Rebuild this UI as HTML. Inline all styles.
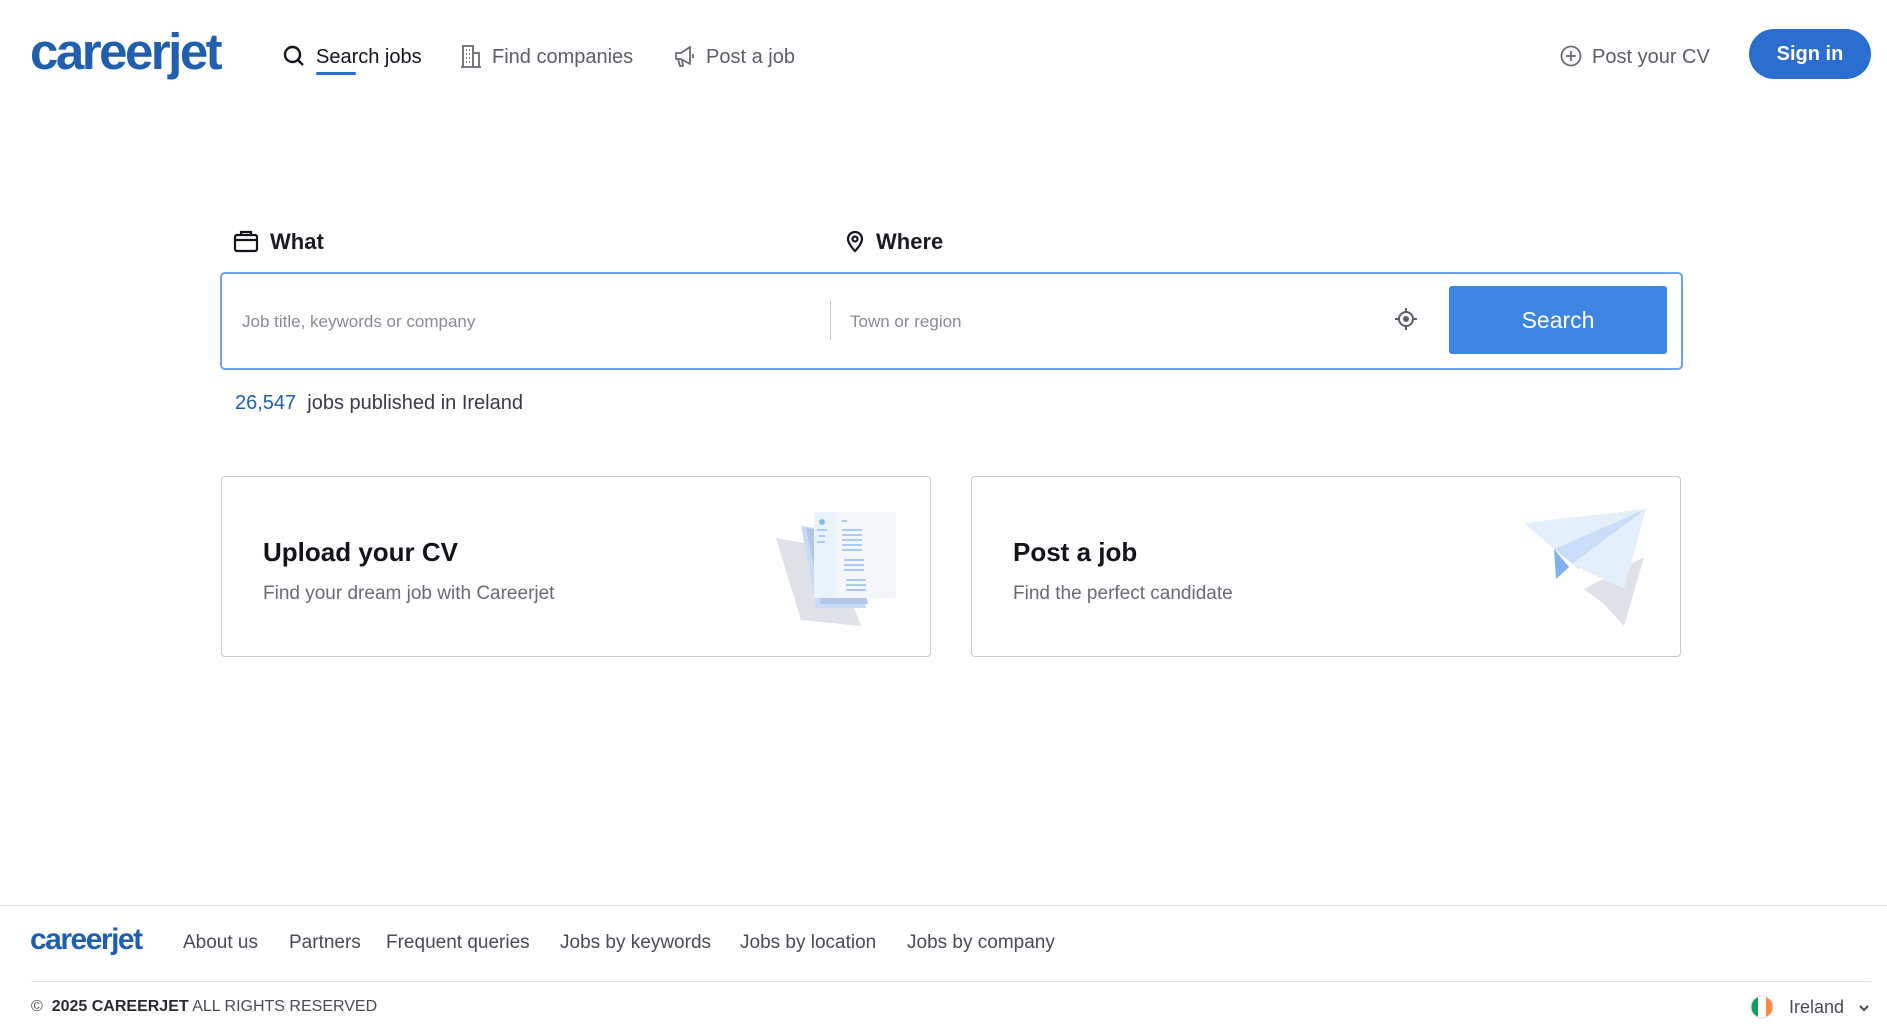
<!DOCTYPE html>
<html><head><meta charset="utf-8"><style>
*{margin:0;padding:0;box-sizing:border-box}
body{width:1887px;height:1026px;position:relative;background:#fff;font-family:"Liberation Sans",sans-serif;color:#1a1a23;overflow:hidden}
.a{position:absolute;white-space:nowrap}
.nav{font-size:20px;color:#5d5d68;top:46px}
.logo{font-weight:bold;color:#1f5fad}
.card{position:absolute;top:476px;height:181px;width:710px;border:1px solid #c9c9d1;border-radius:4px;background:#fff}
.card h2{position:absolute;left:41px;top:60px;font-size:26px;font-weight:bold;color:#13131b}
.card p{position:absolute;left:41px;top:106px;font-size:19px;color:#6a6a74}
.fl{font-size:19px;color:#4a4a55;top:932px}
</style></head><body>
<div class="a logo" style="left:30px;top:22px;font-size:51px;letter-spacing:-2.5px">careerjet</div>

<svg class="a" style="left:283px;top:45px" width="22" height="22" viewBox="0 0 22 22" fill="none" stroke="#13131b" stroke-width="2.4"><circle cx="9.5" cy="9.5" r="7.5"/><path d="M15 15l5 5"/></svg>
<div class="a nav" style="left:316px;color:#13131b">Search jobs</div>
<div class="a" style="left:316px;top:72px;width:40px;height:3px;background:#2a6fcf;border-radius:2px"></div>

<svg class="a" style="left:460px;top:44px" width="22" height="24" viewBox="0 0 22 24" fill="none" stroke="#6a6a74" stroke-width="1.8"><path d="M3 23V2h10v21M13 9h6v14M1 23h20M6 6h1M9 6h1M6 10h1M9 10h1M6 14h1M9 14h1M6 18h1M9 18h1"/></svg>
<div class="a nav" style="left:492px">Find companies</div>

<svg class="a" style="left:673px;top:44px" width="24" height="24" viewBox="0 0 24 24" fill="none" stroke="#6a6a74" stroke-width="1.8" stroke-linejoin="round"><path d="M3 9h5l9-6v17l-9-5H3z M5 15l2 7h3l-1-6 M20 10v4"/></svg>
<div class="a nav" style="left:706px">Post a job</div>

<svg class="a" style="left:1560px;top:45px" width="22" height="22" viewBox="0 0 22 22" fill="none" stroke="#6a6a74" stroke-width="1.8"><circle cx="11" cy="11" r="9.5"/><path d="M11 6v10M6 11h10"/></svg>
<div class="a nav" style="left:1592px">Post your CV</div>
<div class="a" style="left:1749px;top:29px;width:122px;height:50px;border-radius:25px;background:#2a6fcf;color:#fff;font-size:20px;font-weight:bold;text-align:center;line-height:50px">Sign in</div>

<svg class="a" style="left:233px;top:229px" width="26" height="24" viewBox="0 0 26 24" fill="none" stroke="#13131b" stroke-width="2.2"><rect x="2" y="6" width="22" height="16" rx="2"/><path d="M8 6V3h10v3M2 11h22"/></svg>
<div class="a" style="left:270px;top:229px;font-size:22px;font-weight:bold">What</div>
<svg class="a" style="left:845px;top:229px" width="20" height="24" viewBox="0 0 20 24" fill="none" stroke="#13131b" stroke-width="2.2"><path d="M10 22s-7-7-7-12a7 7 0 0 1 14 0c0 5-7 12-7 12z"/><circle cx="10" cy="10" r="2.5"/></svg>
<div class="a" style="left:876px;top:229px;font-size:22px;font-weight:bold">Where</div>

<div class="a" style="left:220px;top:272px;width:1463px;height:98px;border:2px solid #6aa5ea;border-radius:5px"></div>
<div class="a" style="left:242px;top:312px;font-size:17px;color:#8a8a94">Job title, keywords or company</div>
<div class="a" style="left:830px;top:301px;width:1px;height:39px;background:#c9c9d1"></div>
<div class="a" style="left:850px;top:312px;font-size:17px;color:#8a8a94">Town or region</div>
<svg class="a" style="left:1394px;top:307px" width="24" height="24" viewBox="0 0 24 24" fill="none" stroke="#5d5d68" stroke-width="2"><circle cx="12" cy="12" r="7"/><circle cx="12" cy="12" r="2" fill="#5d5d68"/><path d="M12 1v4M12 19v4M1 12h4M19 12h4"/></svg>
<div class="a" style="left:1449px;top:286px;width:218px;height:68px;background:#3d85e3;border-radius:3px;color:#fff;font-size:23px;text-align:center;line-height:68px">Search</div>

<div class="a" style="left:235px;top:392px;font-size:20px;color:#3a3a44"><span style="color:#1f5fad">26,547</span>&nbsp; jobs published in Ireland</div>

<div class="card" style="left:221px"><h2>Upload your CV</h2><p>Find your dream job with Careerjet</p>
<svg class="a" style="left:554px;top:31px" width="125" height="118" viewBox="0 0 125 118"><polygon points="0,30 55,40 85,118 25,112" fill="#dfe1e8"/><polygon points="25,18 75,25 90,100 40,100" fill="#c9dcf5"/><polygon points="30,20 78,26 92,96 45,96" fill="#b2c8e8"/><rect x="38" y="4" width="80" height="86" fill="#eaf2fc"/><rect x="60" y="4" width="60" height="86" fill="#f4f6fa"/><circle cx="46" cy="14" r="3" fill="#8ab8ef"/><g stroke="#a9cbf3" stroke-width="2"><path d="M41 22h10M43 28h6M41 34h8M66 13h5M66 22h20M66 27h20M66 32h20M66 37h20M66 42h20M68 52h20M68 57h20M68 62h20M70 72h20M70 77h20M70 82h20"/></g></svg></div>

<div class="card" style="left:971px"><h2>Post a job</h2><p>Find the perfect candidate</p>
<svg class="a" style="left:552px;top:32px" width="125" height="118" viewBox="0 0 125 118"><polygon points="120,48 100,117 80,95 60,80" fill="#dfe1e8"/><polygon points="0,14 122,0 30,40" fill="#e4effc"/><polygon points="30,40 122,0 55,60" fill="#c8def8"/><polygon points="30,40 45,58 32,70" fill="#7fb2ee"/><polygon points="48,55 122,0 100,80" fill="#e4effc"/></svg></div>

<div class="a" style="left:0;top:905px;width:1887px;height:1px;background:#e0e0e6"></div>
<div class="a logo" style="left:30px;top:923px;font-size:30px;letter-spacing:-1.5px">careerjet</div>
<div class="a fl" style="left:183px">About us</div>
<div class="a fl" style="left:289px">Partners</div>
<div class="a fl" style="left:386px">Frequent queries</div>
<div class="a fl" style="left:560px">Jobs by keywords</div>
<div class="a fl" style="left:740px">Jobs by location</div>
<div class="a fl" style="left:907px">Jobs by company</div>
<div class="a" style="left:31px;top:981px;width:1840px;height:1px;background:#e0e0e6"></div>
<div class="a" style="left:31px;top:998px;font-size:16px;color:#4a4a55">©&nbsp; <b style="color:#2a2a33">2025 CAREERJET</b> ALL RIGHTS RESERVED</div>
<svg class="a" style="left:1750px;top:995px" width="24" height="24" viewBox="0 0 24 24"><clipPath id="c"><circle cx="12" cy="12" r="11"/></clipPath><g clip-path="url(#c)"><rect x="0" y="0" width="8" height="24" fill="#169b62"/><rect x="8" y="0" width="8" height="24" fill="#fff"/><rect x="16" y="0" width="8" height="24" fill="#ff883e"/></g><circle cx="12" cy="12" r="11" fill="none" stroke="#ddd"/></svg>
<div class="a" style="left:1789px;top:997px;font-size:18px;color:#4a4a55">Ireland</div>
<svg class="a" style="left:1858px;top:1003px" width="12" height="10" viewBox="0 0 12 10" fill="none" stroke="#4a4a55" stroke-width="2"><path d="M2 3l4 4 4-4"/></svg>
</body></html>
